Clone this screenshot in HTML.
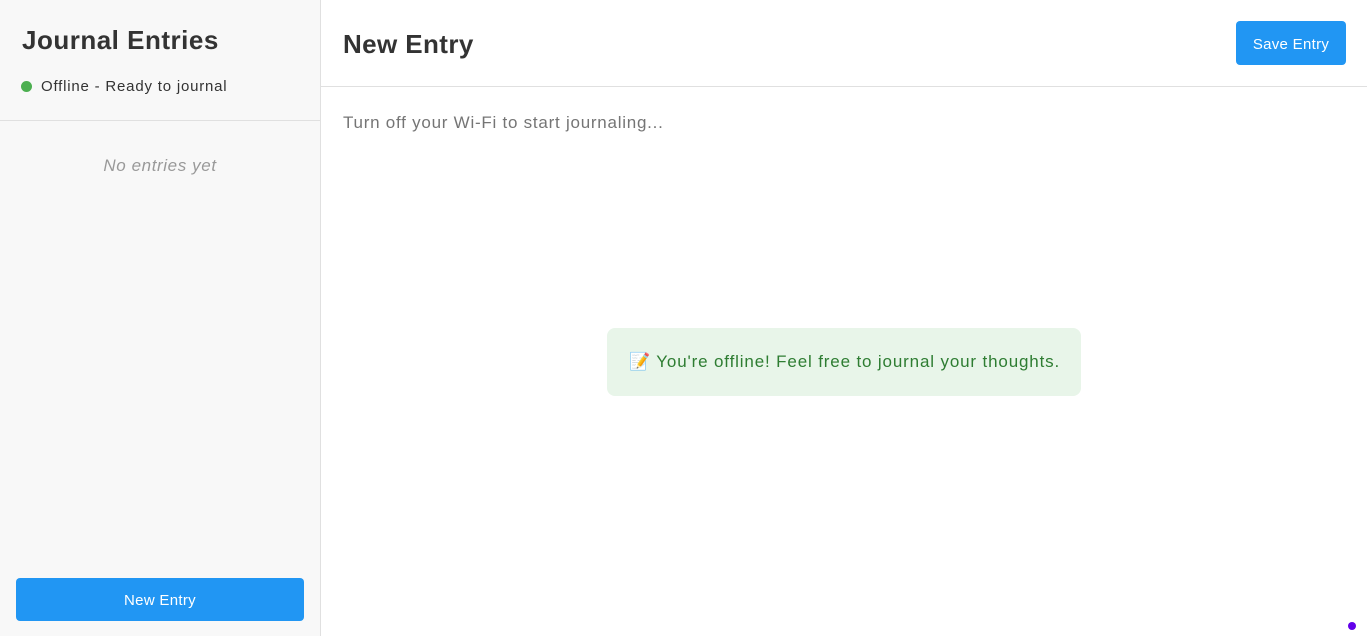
<!DOCTYPE html>
<html><head><style>
*{box-sizing:border-box;margin:0;padding:0}
body{width:1367px;height:636px;overflow:hidden;font-family:"Liberation Sans",sans-serif;background:#fff;position:relative}
.side{position:absolute;left:0;top:0;width:321px;height:636px;background:#f8f8f8;border-right:1px solid #e0e0e0}
.side h1{position:absolute;left:22px;top:25px;font-size:26px;font-weight:bold;color:#333;letter-spacing:0.5px}
.status{position:absolute;left:21px;top:78px;font-size:15px;color:#333;letter-spacing:0.8px}
.dot{display:inline-block;width:11px;height:11px;border-radius:50%;background:#4caf50;margin-right:9px;vertical-align:-1px}
.hr1{position:absolute;left:0;top:120px;width:320px;height:1px;background:#e0e0e0}
.none{position:absolute;left:0;width:320px;top:156px;text-align:center;font-style:italic;color:#999;font-size:17px;letter-spacing:0.6px}
.btn{position:absolute;background:#2196f3;color:#fff;border-radius:4px;font-size:15px;display:flex;align-items:center;justify-content:center;padding-top:2px;letter-spacing:0.3px}
.main h2{position:absolute;left:343px;top:29px;font-size:26px;font-weight:bold;color:#333;letter-spacing:0.4px}
.hr2{position:absolute;left:321px;top:86px;width:1046px;height:1px;background:#e0e0e0}
.ph{position:absolute;left:343px;top:113px;font-size:17px;color:#757575;letter-spacing:0.75px}
.note{position:absolute;left:607px;top:328px;width:474px;height:68px;background:#e8f5e9;border-radius:8px;color:#2e7d32;font-size:17px;padding:24px 0 0 22px;white-space:nowrap;letter-spacing:0.85px}
.pd{position:absolute;left:1348px;top:622px;width:8px;height:8px;border-radius:50%;background:#6200ea}
</style></head><body>
<div class="side">
<h1>Journal Entries</h1>
<div class="status"><span class="dot"></span>Offline - Ready to journal</div>
<div class="hr1"></div>
<div class="none">No entries yet</div>
<div class="btn" style="left:16px;top:578px;width:288px;height:43px">New Entry</div>
</div>
<div class="main">
<h2>New Entry</h2>
<div class="btn" style="left:1236px;top:21px;width:110px;height:44px">Save Entry</div>
<div class="hr2"></div>
<div class="ph">Turn off your Wi-Fi to start journaling...</div>
<div class="note">📝 You're offline! Feel free to journal your thoughts.</div>
</div>
<div class="pd"></div>
</body></html>
